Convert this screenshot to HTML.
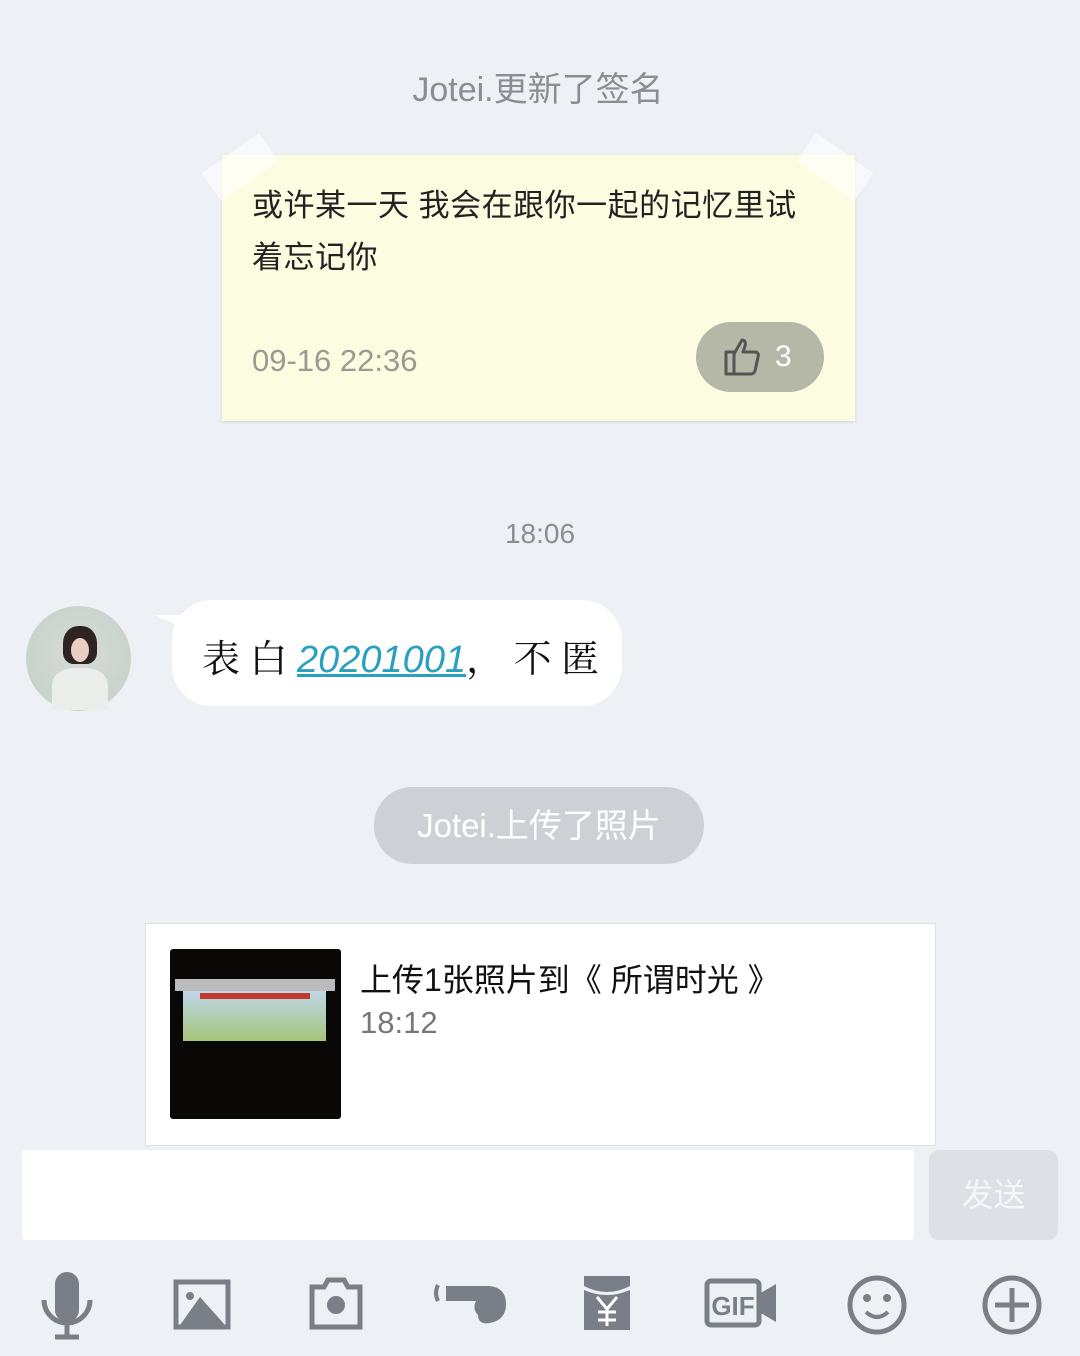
<!DOCTYPE html>
<html><head><meta charset="utf-8"><style>
body{margin:0;width:1080px;height:1356px;background:#edf1f5;font-family:"Liberation Sans","Noto Sans CJK SC",sans-serif;position:relative;overflow:hidden}
.a{position:absolute}
</style></head><body>
<div class="a" style="left:0;top:62px;width:1076px;text-align:center;font-size:34px;color:#8a8d92">Jotei.更新了签名</div>
<div class="a" style="left:222px;top:155px;width:633px;height:266px;background:#fcfde0;box-shadow:0 1px 3px rgba(0,0,0,.12)"></div>
<div class="a" style="left:205px;top:150px;width:70px;height:34px;background:rgba(255,255,255,.6);transform:rotate(-35deg)"></div>
<div class="a" style="left:800px;top:150px;width:70px;height:34px;background:rgba(255,255,255,.6);transform:rotate(35deg)"></div>
<div class="a" style="left:252px;top:180px;width:556px;font-size:31px;line-height:52px;color:#222;letter-spacing:0.5px">或许某一天 我会在跟你一起的记忆里试着忘记你</div>
<div class="a" style="left:252px;top:343px;font-size:31px;color:#9a9a92">09-16 22:36</div>
<div class="a" style="left:696px;top:322px;width:128px;height:70px;border-radius:35px;background:#b5b8a6"></div>
<svg class="a" style="left:722px;top:334px" width="44" height="44" viewBox="0 0 44 44"><path d="M4 18h8v22H4z M12 20l8-14c3 0 4 3 3 6l-2 6h12c3 0 4 3 3 5l-3 14c-1 2-2 3-4 3H12" fill="none" stroke="#555" stroke-width="3" stroke-linejoin="round"/></svg>
<div class="a" style="left:775px;top:340px;font-size:30px;color:#fff">3</div>
<div class="a" style="left:0;top:518px;width:1080px;text-align:center;font-size:28px;color:#8a8d92">18:06</div>
<div class="a" style="left:26px;top:606px;width:105px;height:105px;border-radius:50%;background:radial-gradient(circle at 50% 45%,#d5dcd5,#c9d3cb 70%,#e0e6e0)"></div>
<div class="a" style="left:63px;top:626px;width:34px;height:38px;border-radius:45% 45% 30% 30%;background:#2e2320"></div>
<div class="a" style="left:71px;top:638px;width:18px;height:24px;border-radius:50%;background:#e8cfc4"></div>
<div class="a" style="left:52px;top:668px;width:56px;height:42px;border-radius:40% 40% 0 0;background:#eaeeea"></div>
<div class="a" style="left:155px;top:615px;width:0;height:0;border-top:14px solid #fff;border-left:30px solid transparent"></div>
<div class="a" style="left:172px;top:600px;width:450px;height:106px;border-radius:40px;background:#fff"></div>
<div class="a" style="left:202px;top:628px;font-size:38px;color:#111;font-family:'Liberation Serif','Noto Serif CJK SC',serif">表 白 <span style="color:#2aa0c0;text-decoration:underline;font-family:'Liberation Sans',sans-serif;font-style:italic;font-weight:300">20201001</span>， 不 匿</div>
<div class="a" style="left:374px;top:787px;width:330px;height:77px;border-radius:38px;background:#cdd1d6;color:#fff;font-size:33px;line-height:77px;text-align:center">Jotei.上传了照片</div>
<div class="a" style="left:145px;top:923px;width:789px;height:221px;background:#fff;border:1px solid #dde1e5"></div>
<div class="a" style="left:170px;top:949px;width:171px;height:170px;border-radius:3px;background:#0a0806;overflow:hidden">
<div class="a" style="left:5px;top:30px;width:160px;height:12px;background:#bbb"></div>
<div class="a" style="left:13px;top:42px;width:143px;height:50px;background:linear-gradient(#c0d7ea,#a5c57a)"></div>
<div class="a" style="left:30px;top:44px;width:110px;height:6px;background:#c03a30"></div>
</div>
<div class="a" style="left:360px;top:955px;font-size:32px;color:#111">上传1张照片到《 所谓时光 》</div>
<div class="a" style="left:360px;top:1005px;font-size:31px;color:#777">18:12</div>
<div class="a" style="left:22px;top:1150px;width:892px;height:90px;background:#fff;border-radius:4px"></div>
<div class="a" style="left:929px;top:1150px;width:129px;height:90px;background:#dde1e5;border-radius:10px;color:#f4f6f8;font-size:32px;line-height:90px;text-align:center">发送</div>
<svg class="a" style="left:0;top:1250px" width="1080" height="106" viewBox="0 0 1080 106" fill="#7a7e87" stroke="#7a7e87">
<rect x="55" y="22" width="24" height="50" rx="12" stroke="none"/><path d="M44 50a23 23 0 0 0 46 0M67 73v14M55 87h24" fill="none" stroke-width="5"/>
<rect x="176" y="32" width="52" height="45" fill="none" stroke-width="5"/><circle cx="190" cy="46" r="4" stroke="none"/><path d="M180 75l20-28 25 28z" stroke="none"/>
<path d="M312 37h12l4-7h16l4 7h12v40h-48z" fill="none" stroke-width="5"/><circle cx="336" cy="55" r="9" stroke="none"/>
<path d="M438 35q-4 8 0 16" fill="none" stroke-width="4"/><path d="M446 36h44q16 2 16 18t-16 19q-12 2-12-8-6-6-2-14h-30z" stroke="none"/>
<path d="M584 26h46v10q-23 12-46 0z" stroke="none"/><path d="M584 40q23 10 46 0v40h-46z" stroke="none"/><path d="M597 47l10 12 10-12M607 59v17M598 62h18M598 70h18" fill="none" stroke="#fff" stroke-width="3"/>
<rect x="707" y="31" width="52" height="44" rx="4" fill="none" stroke-width="5"/><path d="M759 44l17-10v38l-17-10z" stroke="none"/>
<text x="733" y="65" font-family="Liberation Sans" font-weight="bold" font-size="26" text-anchor="middle" stroke="none">GIF</text>
<circle cx="877" cy="55" r="27" fill="none" stroke-width="5"/><circle cx="867" cy="48" r="4" stroke="none"/><circle cx="887" cy="48" r="4" stroke="none"/><path d="M866 62q11 10 22 0" fill="none" stroke-width="4"/>
<circle cx="1012" cy="55" r="27" fill="none" stroke-width="5"/><path d="M1012 38v34M995 55h34" fill="none" stroke-width="5"/>
</svg>
</body></html>
